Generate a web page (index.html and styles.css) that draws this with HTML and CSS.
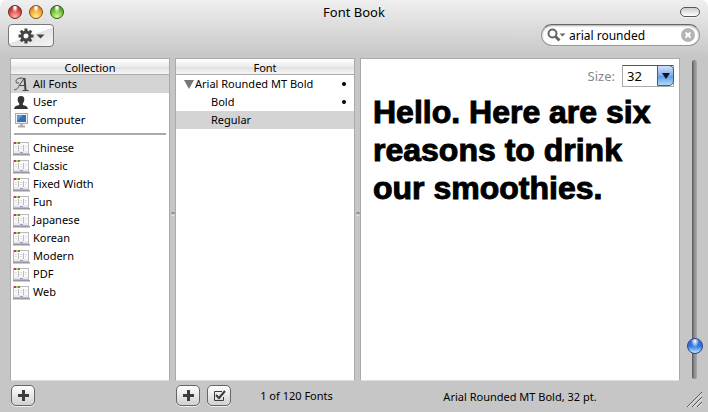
FILE: index.html
```html
<!DOCTYPE html>
<html lang="en">
<head>
  <meta charset="UTF-8">
  <meta name="viewport" content="width=device-width, initial-scale=1.0">
  <title>Font Book</title>
  <link rel="stylesheet" href="styles.css">
</head>
<body>

<!-- Shared icons -->
<svg class="sprite" aria-hidden="true">
  <symbol id="icon-set" viewBox="0 0 17 15">
    <rect x="0.5" y="1.5" width="15" height="11" fill="#fafafa" stroke="#bbb"/>
    <path d="M1 1h2v2H1z" fill="#c23b3b"/>
    <path d="M3 1h2v2H3z" fill="#e0b060"/>
    <path d="M5 1h2v2H5z" fill="#4b9a3b"/>
    <path d="M5.500 4v6M10.500 4v6" stroke="#bbb"/>
    <path d="M2 5.500h2M2 7.500h2M7 5.500h2M7 7.500h2M12 5.500h2M12 7.500h1" stroke="#ddd"/>
    <path d="M1 10h14v2H1z" fill="#e8eaf0"/>
    <path d="M7 11.500h3" stroke="#8f9fc8"/>
    <path d="M0 13.500h17" stroke="#999"/>
    <path d="M0 14.500h17" stroke="#ccc"/>
  </symbol>
  <symbol id="icon-plus" viewBox="0 0 11 11">
    <path d="M5.500 0v11M0 5.500h11" stroke="#3c3c3c" stroke-width="3"/>
  </symbol>
</svg>

<div class="window">
  <!-- Title bar -->
  <header class="title-bar">
    <div class="lights">
      <button class="light red" aria-label="Close"></button>
      <button class="light yellow" aria-label="Minimize"></button>
      <button class="light green" aria-label="Zoom"></button>
    </div>
    <h1>Font Book</h1>
    <button class="pill" aria-label="Toggle toolbar"></button>
  </header>

  <!-- Toolbar -->
  <div class="toolbar">
    <button class="action-btn" aria-label="Action">
      <svg width="27" height="16" viewBox="0 0 27 16">
        <g stroke="#444" stroke-width="3">
          <path d="M8 0.5v3M8 12.5v3M0.5 8h3M12.5 8h3M2.7 2.7l2.1 2.1M11.2 11.2l2.1 2.1M2.7 13.3l2.1-2.1M11.2 4.8l2.1-2.1"/>
          <circle cx="8" cy="8" r="4" fill="none"/>
        </g>
        <path d="M18.5 6.500h8l-4 4z" fill="#444"/>
      </svg>
    </button>
    <div class="search">
      <svg width="19" height="14" viewBox="0 0 19 14">
        <circle cx="5.500" cy="5.500" r="4" fill="none" stroke="#666" stroke-width="2"/>
        <path d="M8.500 8.500l4 4" stroke="#666" stroke-width="3"/>
        <path d="M12.500 5.500h6l-3 3z" fill="#666"/>
      </svg>
      <input type="text" value="arial rounded" aria-label="Search fonts">
      <button class="clear-btn" aria-label="Clear search">
        <svg width="14" height="14" viewBox="0 0 14 14">
          <circle cx="7" cy="7" r="7" fill="#b4b4b4"/>
          <path d="M4.500 4.500l5 5M9.500 4.500l-5 5" stroke="#fff" stroke-width="2"/>
        </svg>
      </button>
    </div>
  </div>

  <main class="columns">
    <!-- Collection column -->
    <section class="panel">
      <h2>Collection</h2>
      <ul class="list">
        <li>
          <button class="row selected">
            <svg width="17" height="15" viewBox="0 0 17 15" fill="none" stroke="#444">
              <path d="M1 12c1.500 2 3.500 0 5.500-4L11 1.500"/>
              <path d="M11.500 1l1 12" stroke-width="2"/>
              <path d="M9.500 13.500h6M6.500 8.500h6M11 1.500c-4-1-8 0-8 3 0 2 2 2 3 1"/>
            </svg>
            All Fonts
          </button>
        </li>
        <li>
          <button class="row">
            <svg width="17" height="15" viewBox="0 0 17 15">
              <path d="M8 1c2.500 0 3.500 1.500 3.300 3.800-.1 1.700-.8 3-1.500 3.700v1.500c2.200.6 4.700 1 5.200 4H1c.5-3 3-3.400 5.200-4V8.500C5.500 7.800 4.800 6.500 4.700 4.800 4.500 2.500 5.500 1 8 1z" fill="#333"/>
            </svg>
            User
          </button>
        </li>
        <li>
          <button class="row">
            <svg width="17" height="15" viewBox="0 0 17 15">
              <rect x="2.500" y="0.500" width="12" height="10" fill="#eee" stroke="#aaa"/>
              <rect x="4" y="2" width="9" height="7" fill="#2f70b8"/>
              <path d="M4 2h6l-6 6z" fill="#5c9bdb"/>
              <path d="M7 11h3v2H7z" fill="#bbb"/>
              <path d="M5 13.500h7" stroke="#aaa" stroke-width="2"/>
            </svg>
            Computer
          </button>
        </li>
        <li class="divider" role="separator"></li>
        <li><button class="row"><svg width="17" height="15"><use href="#icon-set"/></svg>Chinese</button></li>
        <li><button class="row"><svg width="17" height="15"><use href="#icon-set"/></svg>Classic</button></li>
        <li><button class="row"><svg width="17" height="15"><use href="#icon-set"/></svg>Fixed Width</button></li>
        <li><button class="row"><svg width="17" height="15"><use href="#icon-set"/></svg>Fun</button></li>
        <li><button class="row"><svg width="17" height="15"><use href="#icon-set"/></svg>Japanese</button></li>
        <li><button class="row"><svg width="17" height="15"><use href="#icon-set"/></svg>Korean</button></li>
        <li><button class="row"><svg width="17" height="15"><use href="#icon-set"/></svg>Modern</button></li>
        <li><button class="row"><svg width="17" height="15"><use href="#icon-set"/></svg>PDF</button></li>
        <li><button class="row"><svg width="17" height="15"><use href="#icon-set"/></svg>Web</button></li>
      </ul>
    </section>

    <div class="splitter"><span class="dimple"></span></div>

    <!-- Font column -->
    <section class="panel">
      <h2>Font</h2>
      <ul class="list">
        <li>
          <button class="row family">
            <svg width="10" height="9" viewBox="0 0 10 9"><path d="M0 0h10L5 9z" fill="#777"/></svg>
            <span>Arial Rounded MT Bold</span>
            <i class="dot"></i>
          </button>
        </li>
        <li><button class="row face"><span>Bold</span><i class="dot"></i></button></li>
        <li><button class="row face selected"><span>Regular</span></button></li>
      </ul>
    </section>

    <div class="splitter"><span class="dimple"></span></div>

    <!-- Preview -->
    <section class="panel preview">
      <div class="size">
        <label for="size">Size:</label>
        <div class="combo">
          <select id="size">
            <option>24</option>
            <option selected>32</option>
            <option>48</option>
          </select>
          <span class="combo-arrow">
            <svg width="8" height="6" viewBox="0 0 8 6"><path d="M0 0h8L4 6z" fill="#0a1230"/></svg>
          </span>
        </div>
      </div>
      <p class="sample">Hello. Here are six reasons to drink our smoothies.</p>
    </section>

    <div class="slider">
      <input type="range" min="9" max="288" value="32" aria-label="Preview size">
    </div>
  </main>

  <!-- Bottom bar -->
  <footer class="columns bottom-bar">
    <div class="tools">
      <button class="tool-btn" aria-label="Add collection"><svg width="11" height="11"><use href="#icon-plus"/></svg></button>
    </div>
    <div class="tools fonts-tools">
      <button class="tool-btn" aria-label="Add font"><svg width="11" height="11"><use href="#icon-plus"/></svg></button>
      <button class="tool-btn" aria-label="Disable font">
        <svg width="13" height="12" viewBox="0 0 13 12" fill="none" stroke="#3c3c3c">
          <path d="M9 1.500H1.500v9h9V7"/>
          <path d="M3 5l3 3 6-7" stroke-width="2"/>
        </svg>
      </button>
      <span class="count">1 of 120 Fonts</span>
    </div>
    <div class="status">Arial Rounded MT Bold, 32 pt.</div>
    <svg class="grip" width="16" height="16" viewBox="0 0 16 16" fill="none">
      <path d="M1 16L16 1M6 16L16 6M11 16l5-5" stroke="#555"/>
      <path d="M2.500 16L16 2.500M7.500 16L16 7.500M12.500 16l3.500-3.500" stroke="#eee"/>
    </svg>
  </footer>
</div>

</body>
</html>
```
FILE: styles.css
```css
/* Global Styling */
* {
  box-sizing: border-box;
}

body {
  margin: 0;
  background: #fff;
  color: #000;
  font-family: "Noto Sans", "Open Sans", sans-serif;
  font-size: 11px;
}

button, input, select {
  font: inherit;
  color: inherit;
  margin: 0;
  padding: 0;
  border: none;
  background: none;
}

h1, h2, p, ul {
  margin: 0;
  padding: 0;
}

.sprite {
  position: absolute;
  width: 0;
  height: 0;
}

.window {
  display: flex;
  flex-direction: column;
  height: 100vh;
  border-radius: 7px 7px 0 0;
  background: linear-gradient(#efefef, #dedede 24px, #c6c6c6 58px) #c6c6c6;
}

/* Title Bar */
.title-bar {
  display: grid;
  grid-template-columns: 1fr auto 1fr;
  align-items: center;
  height: 23px;
  padding: 0 8px;
}

.title-bar h1 {
  font-size: 13px;
  font-weight: normal;
}

.lights {
  display: flex;
  gap: 7px;
}

.light {
  width: 14px;
  height: 14px;
  border: 1px solid;
  border-radius: 50%;
}

.red {
  border-color: #6b2424;
  background: radial-gradient(ellipse at 50% 12%, #fff 8%, transparent 35%), radial-gradient(circle at 50% 90%, #ffb5ac, #d8403c 60%, #8c1a1a);
}

.yellow {
  border-color: #8a4d1c;
  background: radial-gradient(ellipse at 50% 12%, #fff 8%, transparent 35%), radial-gradient(circle at 50% 90%, #fff780, #f09c30 60%, #a65310);
}

.green {
  border-color: #2f5a1c;
  background: radial-gradient(ellipse at 50% 12%, #fff 8%, transparent 35%), radial-gradient(circle at 50% 90%, #d3ff8a, #68b530 60%, #2c6a14);
}

.pill {
  justify-self: end;
  width: 20px;
  height: 10px;
  border: 1px solid #555;
  border-radius: 5px;
  background: linear-gradient(#ccc, #fff);
  box-shadow: 0 1px 0 #f5f5f5;
}

/* Toolbar */
.toolbar {
  display: flex;
  justify-content: space-between;
  align-items: flex-start;
  height: 35px;
  padding: 1px 8px 0;
}

.action-btn {
  display: flex;
  justify-content: center;
  align-items: center;
  width: 46px;
  height: 23px;
  border: 1px solid #777;
  border-radius: 4px;
  background: linear-gradient(160deg, #fdfdfd 50%, #e4e4e4 50%, #f4f4f4);
}

.search {
  display: flex;
  align-items: center;
  gap: 3px;
  width: 159px;
  height: 22px;
  padding: 0 4px 0 5px;
  border: 1px solid #999;
  border-top-color: #666;
  border-radius: 11px;
  background: #fff;
  box-shadow: inset 0 1px 2px #aaa;
}

.search input {
  flex: 1;
  min-width: 0;
  font-size: 12px;
  outline: none;
}

.clear-btn {
  display: flex;
}

/* Columns */
.columns {
  display: grid;
  grid-template-columns: 160px 5px 180px 5px 1fr 28px;
  padding-left: 10px;
}

main.columns {
  flex: 1;
}

.panel {
  border: 1px solid #aaa;
  border-bottom-color: #ddd;
  background: #fff;
}

.panel h2 {
  height: 16px;
  border-bottom: 1px solid #aaa;
  background: linear-gradient(#fff, #ececec 50%, #dedede 50%, #f6f6f6);
  font-size: 11px;
  font-weight: normal;
  line-height: 18px;
  text-align: center;
}

.list {
  list-style: none;
}

.row {
  display: flex;
  align-items: center;
  gap: 3px;
  width: 100%;
  height: 18px;
  padding: 0 8px 0 2px;
  line-height: 16px;
  text-align: left;
}

.row.selected {
  background: #d4d4d4;
}

.divider {
  height: 2px;
  margin: 4px 3px;
  background: #aaa;
}

.family {
  gap: 1px;
  padding-left: 8px;
}

.face {
  padding-left: 35px;
}

.dot {
  width: 4px;
  height: 4px;
  margin-left: auto;
  border-radius: 50%;
  background: #000;
}

.splitter {
  display: flex;
  justify-content: center;
  align-items: center;
  padding-bottom: 12px;
}

.dimple {
  width: 4px;
  height: 4px;
  border-radius: 50%;
  background: linear-gradient(#666, #fff);
}

/* Preview */
.preview {
  padding: 6px 5px 0 12px;
}

.size {
  display: flex;
  justify-content: flex-end;
  align-items: center;
  gap: 7px;
  font-size: 13px;
}

.size label {
  color: #888;
}

.combo {
  display: grid;
  width: 52px;
  height: 22px;
}

.combo select {
  grid-area: 1 / 1;
  appearance: none;
  padding-left: 4px;
  border: 1px solid #aaa;
  border-top-color: #555;
  background: #fff;
}

.combo-arrow {
  grid-area: 1 / 1;
  display: flex;
  justify-content: center;
  align-items: center;
  justify-self: end;
  width: 17px;
  height: 21px;
  border: 1px solid #3a5a9c;
  border-radius: 0 5px 5px 0;
  background: linear-gradient(#cfe0fa, #86aeea 50%, #5b93e2 50%, #a9dcfc);
  pointer-events: none;
}

.sample {
  padding-top: 6px;
  font-family: "Liberation Sans", sans-serif;
  font-size: 32px;
  font-weight: bold;
  line-height: 38px;
  -webkit-text-stroke: 1px #000;
  stroke-linejoin: round;
}

/* Size Slider */
.slider {
  display: flex;
  justify-content: center;
  min-height: 0;
  padding: 2px 0;
}

.slider input {
  appearance: none;
  writing-mode: vertical-lr;
  direction: rtl;
  width: 16px;
}

.slider input::-webkit-slider-runnable-track {
  width: 5px;
  border-radius: 3px;
  background: linear-gradient(90deg, #555, #888 40%, #aaa);
}

.slider input::-webkit-slider-thumb {
  appearance: none;
  width: 16px;
  height: 16px;
  margin-left: -5px;
  border: 1px solid #2a3f8c;
  border-radius: 50%;
  background: radial-gradient(ellipse at 50% 15%, #e8f0ff 5%, transparent 40%), linear-gradient(#4468c8, #2f74dd 50%, #b8f0ff);
}

/* Bottom Bar */
.bottom-bar {
  height: 31px;
}

.tools {
  display: flex;
  align-items: flex-start;
  gap: 7px;
  padding: 4px 0 0 1px;
}

.fonts-tools {
  grid-column: 3;
}

.tool-btn {
  display: flex;
  justify-content: center;
  align-items: center;
  width: 24px;
  height: 21px;
  border: 1px solid #666;
  border-radius: 5px;
  background: linear-gradient(#fff, #d0d0d0);
  box-shadow: 0 1px 0 #eee;
}

.count {
  flex: 1;
  line-height: 21px;
  text-align: center;
}

.status {
  grid-column: 5;
  padding-top: 5px;
  line-height: 21px;
  text-align: center;
}

.grip {
  align-self: end;
  margin: 0 0 5px 6px;
}
```
